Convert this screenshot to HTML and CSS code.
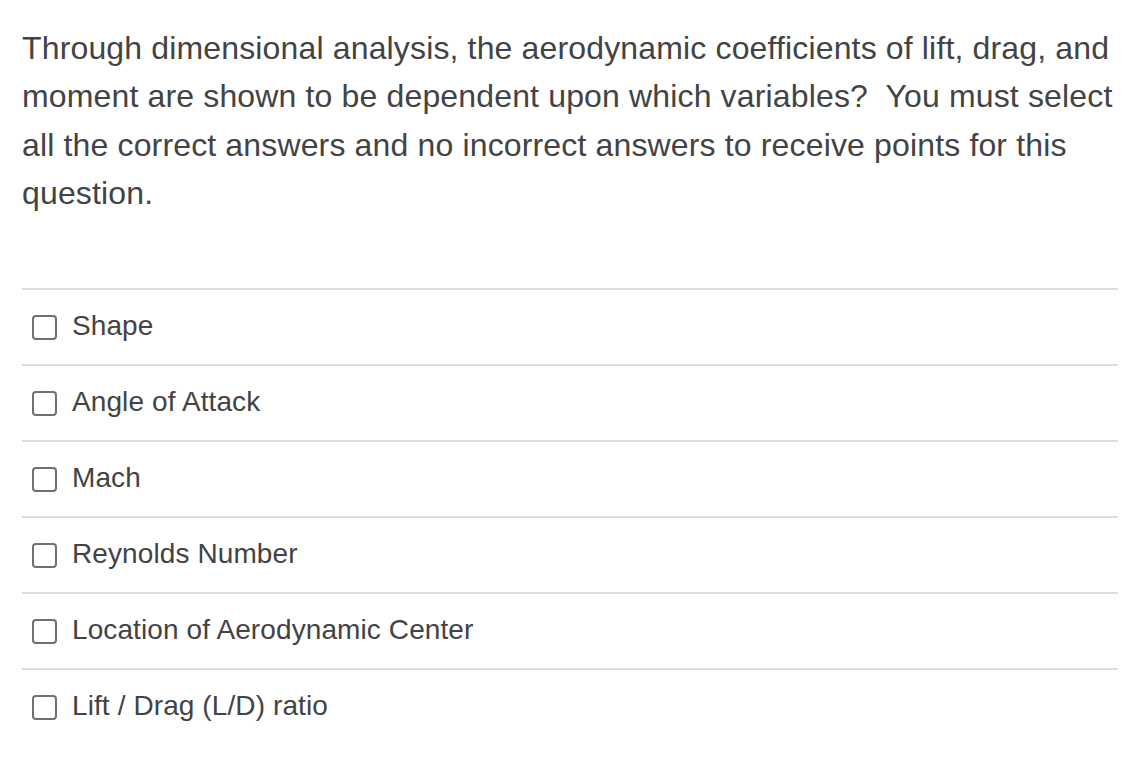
FILE: index.html
```html
<!DOCTYPE html>
<html>
<head>
<meta charset="utf-8">
<link rel="stylesheet" href="styles.css">
</head>
<body>
<div class="question">
  <p class="prompt">Through dimensional analysis, the aerodynamic coefficients of lift, drag, and moment are shown to be dependent upon which variables?&nbsp; You must select all the correct answers and no incorrect answers to receive points for this question.</p>
  <ul class="answers">
    <li class="answer"><span class="box"></span><span class="label">Shape</span></li>
    <li class="answer"><span class="box"></span><span class="label">Angle of Attack</span></li>
    <li class="answer"><span class="box"></span><span class="label">Mach</span></li>
    <li class="answer"><span class="box"></span><span class="label">Reynolds Number</span></li>
    <li class="answer"><span class="box"></span><span class="label">Location of Aerodynamic Center</span></li>
    <li class="answer"><span class="box"></span><span class="label">Lift / Drag (L/D) ratio</span></li>
  </ul>
</div>
</body>
</html>
```

FILE: styles.css
```css
html, body {
  margin: 0;
  padding: 0;
  background: #ffffff;
}
body {
  font-family: "Liberation Sans", Arial, sans-serif;
  color: #434343;
}
.question {
  padding: 24px 22px 0 22px;
}
.prompt {
  margin: 0;
  font-size: 32px;
  line-height: 48.3px;
  letter-spacing: 0.15px;
}
.answers {
  list-style: none;
  margin: 71px 0 0 0;
  padding: 0;
}
.answer {
  display: flex;
  align-items: center;
  gap: 15px;
  height: 74px;
  border-top: 2px solid #dddddd;
  padding-left: 10px;
}
.box {
  width: 21px;
  height: 21px;
  border: 2px solid #707070;
  border-radius: 4px;
  flex: none;
}
.label {
  font-size: 28px;
  line-height: 32px;
  letter-spacing: 0.1px;
  padding-bottom: 3px;
}
```
